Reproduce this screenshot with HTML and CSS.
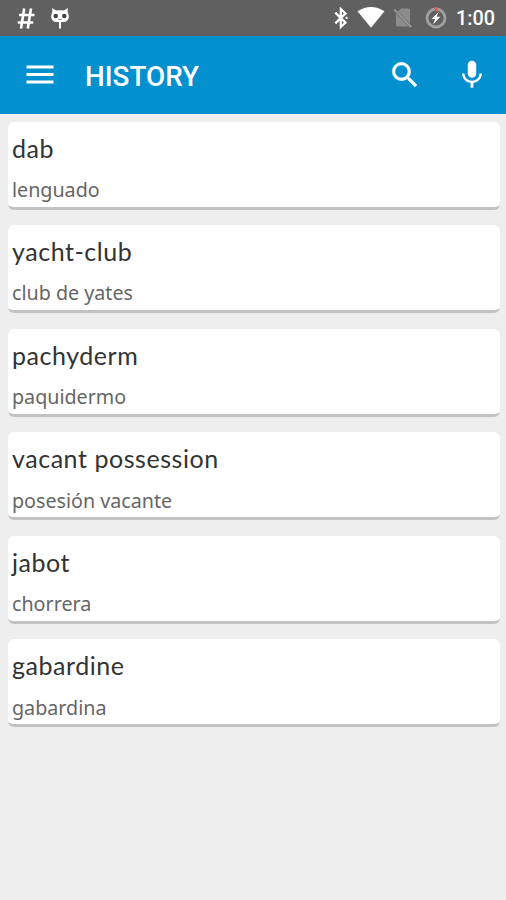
FILE: index.html
```html
<!DOCTYPE html>
<html lang="en">
<head>
<meta charset="utf-8">
<title>History</title>
<link rel="stylesheet" href="styles.css">
</head>
<body>
<div class="status">
  <svg class="hash" width="18" height="24" viewBox="0 0 18 24" fill="none" stroke="#fff" stroke-width="2.6"><path d="M7.2 2.500 4 22.500M14 2.500 10.8 22.500M2 9h15.5M.7 16.500h15.5"/></svg>
  <svg class="cat" width="20" height="24" viewBox="0 0 20 24"><path fill="#fff" d="M2.2 2 6 4.6Q10 3.800 14 4.600L17.800 2 17.600 6.200Q19.400 8 18.800 11.400 18 15.600 13.400 16H11V22.500H9V16H6.600Q2 15.600 1.200 11.400.6 8 2.400 6.200Z"/><circle cx="5.700" cy="10" r="2.300" fill="#444"/><circle cx="14.300" cy="10" r="2.300" fill="#444"/><path d="M8.500 13.400h3" stroke="#777"/></svg>
  <span class="spacer"></span>
  <svg class="bt" width="14" height="22" viewBox="0 0 14 22" fill="none" stroke="#fff" stroke-width="2.2"><path d="M1.300 5.600 11.500 15.600 6.800 20V2L11.500 6.400 1.300 16.400"/><path d="M11.600 10.900h2"/></svg>
  <svg class="wifi" width="28" height="22" viewBox="0 0 28 22"><path fill="#fff" d="M.5 4.300Q14-4.200 27.500 4.300L14 20.800Z"/></svg>
  <svg class="sim" width="20" height="22" viewBox="0 0 20 22"><path fill="#8c8c8c" d="M8 1.400h7.600q1.400 0 1.400 1.400v13.700L5 4.500ZM3 6.500 15.800 19.400H4.400Q3 19.400 3 18Z"/><path d="M1.200 2.500 18.200 20" stroke="#999" stroke-width="1.800"/></svg>
  <svg class="battery" width="22" height="22" viewBox="0 0 22 22"><circle cx="11" cy="11" r="9" fill="none" stroke="#a0a0a0" stroke-width="2.800"/><path d="M11 .2v4" stroke="#f0503c" stroke-width="2.400"/><path fill="#fff" d="M13.800 4.800 6.500 12h3.600l-2 5.600 7.200-7.800h-3.800Z"/></svg>
  <span class="clock">1:00</span>
</div>
<header class="bar">
  <svg class="menu" width="28" height="20" viewBox="0 0 28 20" fill="none" stroke="#fff" stroke-width="3"><path d="M.5 2h27M.5 9.500h27M.5 17h27"/></svg>
  <h1>HISTORY</h1>
  <span class="spacer"></span>
  <svg class="search" width="34" height="34" viewBox="0 0 24 24" fill="#fff" stroke="#fff" stroke-width=".3"><path d="M15.5 14h-.79l-.28-.27A6.47 6.47 0 0 0 16 9.5 6.5 6.5 0 1 0 9.5 16c1.61 0 3.09-.59 4.23-1.57l.27.28v.79l5 4.99L20.49 19l-4.99-5zm-6 0C7.01 14 5 11.99 5 9.5S7.01 5 9.5 5 14 7.01 14 9.5 11.99 14 9.500 14z"/></svg>
  <svg class="mic" width="34" height="34" viewBox="0 0 24 24" fill="#fff"><path d="M12 14c1.66 0 2.99-1.34 2.99-3L15 5c0-1.66-1.34-3-3-3S9 3.340 9 5v6c0 1.66 1.340 3 3 3zm5.300-3c0 3-2.540 5.100-5.300 5.100S6.700 14 6.700 11H5c0 3.410 2.720 6.230 6 6.720V21h2v-3.280c3.280-.480 6-3.300 6-6.720h-1.700z"/></svg>
</header>
<main class="list">
  <article class="card"><h2>dab</h2><p>lenguado</p></article>
  <article class="card"><h2>yacht-club</h2><p>club de yates</p></article>
  <article class="card"><h2>pachyderm</h2><p>paquidermo</p></article>
  <article class="card"><h2>vacant possession</h2><p>posesión vacante</p></article>
  <article class="card"><h2>jabot</h2><p>chorrera</p></article>
  <article class="card"><h2>gabardine</h2><p>gabardina</p></article>
</main>
</body>
</html>
```
FILE: styles.css
```css
* { box-sizing: border-box; }
body { margin: 0; min-height: 900px; background: #eee; font-family: "Noto Sans", sans-serif; }
svg { display: block; flex: none; }
h1, h2, p { margin: 0; white-space: nowrap; }
.spacer { flex: 1; }
.status { display: flex; align-items: center; height: 36px; padding: 0 11px 0 17px; background: #606060; }
.cat { margin-left: 15px; }
.wifi { margin-left: 9px; }
.sim { margin-left: 8px; }
.battery { margin-left: 12px; }
.clock { margin: 2px 0 0 9px; font: 500 19.8px/36px Roboto, sans-serif; color: #fff; }
.bar { display: flex; align-items: center; height: 78px; padding: 0 17px 0 26px; background: #0390ce; color: #fff; }
.bar h1 { margin: 3px 0 0 31px; font: 500 27.8px/36px Roboto, sans-serif; }
.search { margin-right: 33px; }
.list { display: flex; flex-direction: column; gap: 15.6px; padding: 7.5px 6.5px 0 8px; }
.card { height: 88px; padding: 8px 4px 0; background: #fff; border-bottom: 3.5px solid #c2c2c2; border-radius: 6px; }
.card h2 { font: 400 25px/36px Lato, sans-serif; letter-spacing: 0.55px; color: #333; }
.card p { margin-top: 10.4px; font-size: 19.7px; line-height: 28px; color: #666; }
```
